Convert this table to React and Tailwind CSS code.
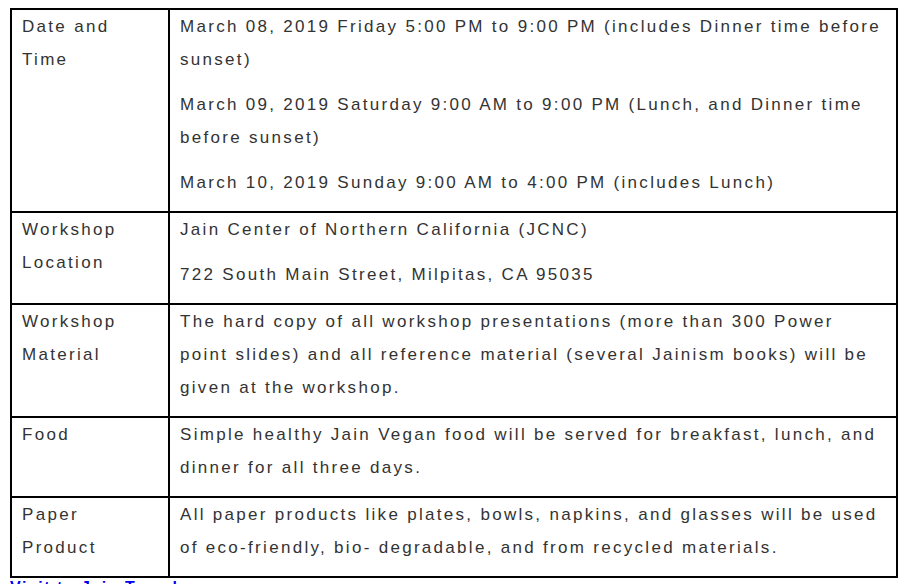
export default function App() {
  const rows = [
    {
      label: ["Date and", "Time"],
      paras: [
        "March 08, 2019 Friday 5:00 PM to 9:00 PM (includes Dinner time before sunset)",
        "March 09, 2019 Saturday 9:00 AM to 9:00 PM (Lunch, and Dinner time before sunset)",
        "March 10, 2019 Sunday 9:00 AM to 4:00 PM (includes Lunch)",
      ],
    },
    {
      label: ["Workshop", "Location"],
      paras: [
        "Jain Center of Northern California (JCNC)",
        "722 South Main Street, Milpitas, CA 95035",
      ],
    },
    {
      label: ["Workshop", "Material"],
      paras: [
        "The hard copy of all workshop presentations (more than 300 Power point slides) and all reference material (several Jainism books) will be given at the workshop.",
      ],
    },
    {
      label: ["Food"],
      paras: [
        "Simple healthy Jain Vegan food will be served for breakfast, lunch, and dinner for all three days.",
      ],
    },
    {
      label: ["Paper", "Product"],
      paras: [
        "All paper products like plates, bowls, napkins, and glasses will be used of eco-friendly, bio- degradable, and from recycled materials.",
      ],
    },
  ];
  return (
    <div
      className="w-[909px] h-[584px] overflow-hidden bg-white pt-[8px] pl-[10px] text-[#333333] text-[17px] leading-[33px] tracking-[2.3px]"
      style={{ fontFamily: '"Liberation Sans", Arial, sans-serif' }}
    >
      <table className="border-collapse w-[888px] border-2 border-black">
        <tbody>
          {rows.map((r, i) => (
            <tr key={i}>
              <td className="border-2 border-black w-[158px] align-top px-[10px] pt-0 pb-[12px]">
                {r.label.map((l, j) => (
                  <div key={j}>{l}</div>
                ))}
              </td>
              <td className="border-2 border-black align-top px-[10px] pt-0 pb-0">
                {r.paras.map((p, j) => (
                  <p key={j} className="mb-[12px]">
                    {p}
                  </p>
                ))}
              </td>
            </tr>
          ))}
        </tbody>
      </table>
      <div className="mt-0 text-[#0000ee] font-bold text-[16px] leading-[20px] tracking-[1.5px]">
        Visit to Jain Temples
      </div>
    </div>
  );
}
